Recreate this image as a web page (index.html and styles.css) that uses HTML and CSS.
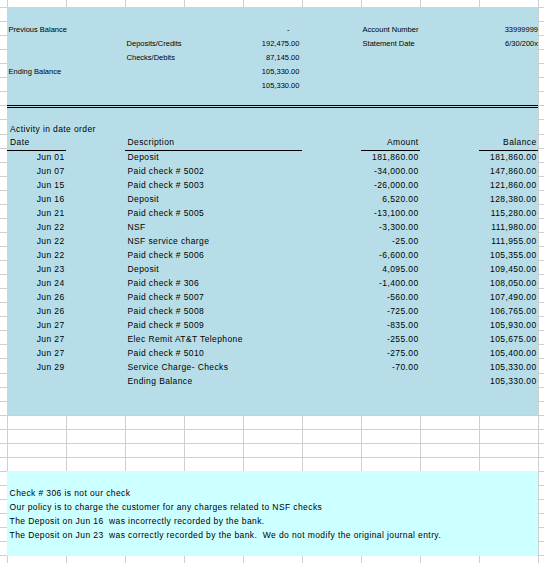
FILE: index.html
```html
<!DOCTYPE html>
<html lang="en">
<head>
<meta charset="utf-8">
<title>Bank Statement</title>
<link rel="stylesheet" href="styles.css">
</head>
<body>
<div class="sheet">
  <section class="panel panel--blue">
    <div class="summary">
      <div class="srow">
        <span class="c-a lbl">Previous Balance</span>
        <span class="c-e num dash">-</span>
        <span class="c-g lbl">Account Number</span>
        <span class="c-i num edge">33999999</span>
      </div>
      <div class="srow">
        <span class="c-c lbl">Deposits/Credits</span>
        <span class="c-e num">192,475.00</span>
        <span class="c-g lbl">Statement Date</span>
        <span class="c-i num edge">6/30/200x</span>
      </div>
      <div class="srow">
        <span class="c-c lbl">Checks/Debits</span>
        <span class="c-e num">87,145.00</span>
      </div>
      <div class="srow">
        <span class="c-a lbl">Ending Balance</span>
        <span class="c-e num">105,330.00</span>
      </div>
      <div class="srow">
        <span class="c-e num">105,330.00</span>
      </div>
    </div>

    <div class="activity">
      <div class="arow"><span class="c-a title">Activity in date order</span></div>
      <div class="arow head">
        <span class="c-a title">Date</span>
        <span class="c-ce desc">Description</span>
        <span class="c-g num">Amount</span>
        <span class="c-i num">Balance</span>
      </div>
      <div class="arow"><span class="c-a num date">Jun 01</span><span class="c-c desc">Deposit</span><span class="c-g num">181,860.00</span><span class="c-i num">181,860.00</span></div>
      <div class="arow"><span class="c-a num date">Jun 07</span><span class="c-c desc">Paid check # 5002</span><span class="c-g num">-34,000.00</span><span class="c-i num">147,860.00</span></div>
      <div class="arow"><span class="c-a num date">Jun 15</span><span class="c-c desc">Paid check # 5003</span><span class="c-g num">-26,000.00</span><span class="c-i num">121,860.00</span></div>
      <div class="arow"><span class="c-a num date">Jun 16</span><span class="c-c desc">Deposit</span><span class="c-g num">6,520.00</span><span class="c-i num">128,380.00</span></div>
      <div class="arow"><span class="c-a num date">Jun 21</span><span class="c-c desc">Paid check # 5005</span><span class="c-g num">-13,100.00</span><span class="c-i num">115,280.00</span></div>
      <div class="arow"><span class="c-a num date">Jun 22</span><span class="c-c desc">NSF</span><span class="c-g num">-3,300.00</span><span class="c-i num">111,980.00</span></div>
      <div class="arow"><span class="c-a num date">Jun 22</span><span class="c-c desc">NSF service charge</span><span class="c-g num">-25.00</span><span class="c-i num">111,955.00</span></div>
      <div class="arow"><span class="c-a num date">Jun 22</span><span class="c-c desc">Paid check # 5006</span><span class="c-g num">-6,600.00</span><span class="c-i num">105,355.00</span></div>
      <div class="arow"><span class="c-a num date">Jun 23</span><span class="c-c desc">Deposit</span><span class="c-g num">4,095.00</span><span class="c-i num">109,450.00</span></div>
      <div class="arow"><span class="c-a num date">Jun 24</span><span class="c-c desc">Paid check # 306</span><span class="c-g num">-1,400.00</span><span class="c-i num">108,050.00</span></div>
      <div class="arow"><span class="c-a num date">Jun 26</span><span class="c-c desc">Paid check # 5007</span><span class="c-g num">-560.00</span><span class="c-i num">107,490.00</span></div>
      <div class="arow"><span class="c-a num date">Jun 26</span><span class="c-c desc">Paid check # 5008</span><span class="c-g num">-725.00</span><span class="c-i num">106,765.00</span></div>
      <div class="arow"><span class="c-a num date">Jun 27</span><span class="c-c desc">Paid check # 5009</span><span class="c-g num">-835.00</span><span class="c-i num">105,930.00</span></div>
      <div class="arow"><span class="c-a num date">Jun 27</span><span class="c-c desc">Elec Remit AT&amp;T Telephone</span><span class="c-g num">-255.00</span><span class="c-i num">105,675.00</span></div>
      <div class="arow"><span class="c-a num date">Jun 27</span><span class="c-c desc">Paid check # 5010</span><span class="c-g num">-275.00</span><span class="c-i num">105,400.00</span></div>
      <div class="arow"><span class="c-a num date">Jun 29</span><span class="c-c desc">Service Charge- Checks</span><span class="c-g num">-70.00</span><span class="c-i num">105,330.00</span></div>
      <div class="arow"><span class="c-c desc">Ending Balance</span><span class="c-i num">105,330.00</span></div>
    </div>
  </section>

  <div class="gap"></div>

  <section class="panel panel--cyan">
    <p>Check # 306 is not our check</p>
    <p>Our policy is to charge the customer for any charges related to NSF checks</p>
    <p>The Deposit on Jun 16  was incorrectly recorded by the bank.</p>
    <p>The Deposit on Jun 23  was correctly recorded by the bank.  We do not modify the original journal entry.</p>
  </section>
</div>
</body>
</html>
```

FILE: styles.css
```css
* {
  box-sizing: border-box;
  margin: 0;
  padding: 0;
}

body {
  margin: 0;
  background: #ffffff;
}

.sheet {
  width: 544px;
  height: 563px;
  overflow: hidden;
  padding-top: 7px;
  font-family: "Liberation Sans", Arial, Helvetica, sans-serif;
  color: #000000;
  background-color: #ffffff;
  background-image:
    linear-gradient(to right, #cfcfcf 1px, transparent 1px),
    repeating-linear-gradient(to bottom, #cfcfcf 0, #cfcfcf 1px, transparent 1px, transparent 14.06px);
  background-size: 59px 100%, 100% calc(100% - 7px);
  background-position: 7px 0, 0 7px;
  background-repeat: repeat-x, no-repeat;
}

.panel {
  margin-left: 7px;
  width: 531px;
}

.panel--blue {
  background: #b7dee8;
  height: 408px;
}

/* top summary block */
.summary {
  height: 98px;
  padding-top: 16.2px;
  font-size: 7.5px;
}

.srow,
.arow {
  display: grid;
  grid-template-columns: repeat(9, 59px);
  height: 14px;
  line-height: 14px;
}

.srow span,
.arow span {
  white-space: nowrap;
  min-width: 0;
}

.c-a { grid-column: 1; }
.c-c { grid-column: 3; }
.c-ce { grid-column: 3 / 6; }
.c-e { grid-column: 5; }
.c-g { grid-column: 7; }
.c-i { grid-column: 9; }

.num {
  text-align: right;
}

.srow .lbl {
  padding-left: 1.6px;
}

.srow .num {
  padding-right: 2.6px;
}

.srow .num.dash {
  padding-right: 12.5px;
}

.srow .num.edge {
  padding-right: 0;
}

/* activity table */
.activity {
  border-top: 3px double #000000;
  padding-top: 14px;
  font-size: 8.5px;
  letter-spacing: 0.4px;
}

.arow .title {
  padding-left: 3px;
}

.arow .desc {
  padding-left: 2.5px;
}

.arow .num {
  padding-right: 1.4px;
}

.arow .date {
  padding-right: 1.4px;
}

.head span {
  border-bottom: 1px solid #000000;
  line-height: 13.6px;
}

.gap {
  height: 56px;
}

/* notes block */
.panel--cyan {
  background: #ccffff;
  height: 84.5px;
  padding: 14.5px 0 0 2.6px;
  font-size: 8.5px;
  letter-spacing: 0.4px;
}

.panel--cyan p {
  line-height: 14px;
  white-space: pre;
}
```
